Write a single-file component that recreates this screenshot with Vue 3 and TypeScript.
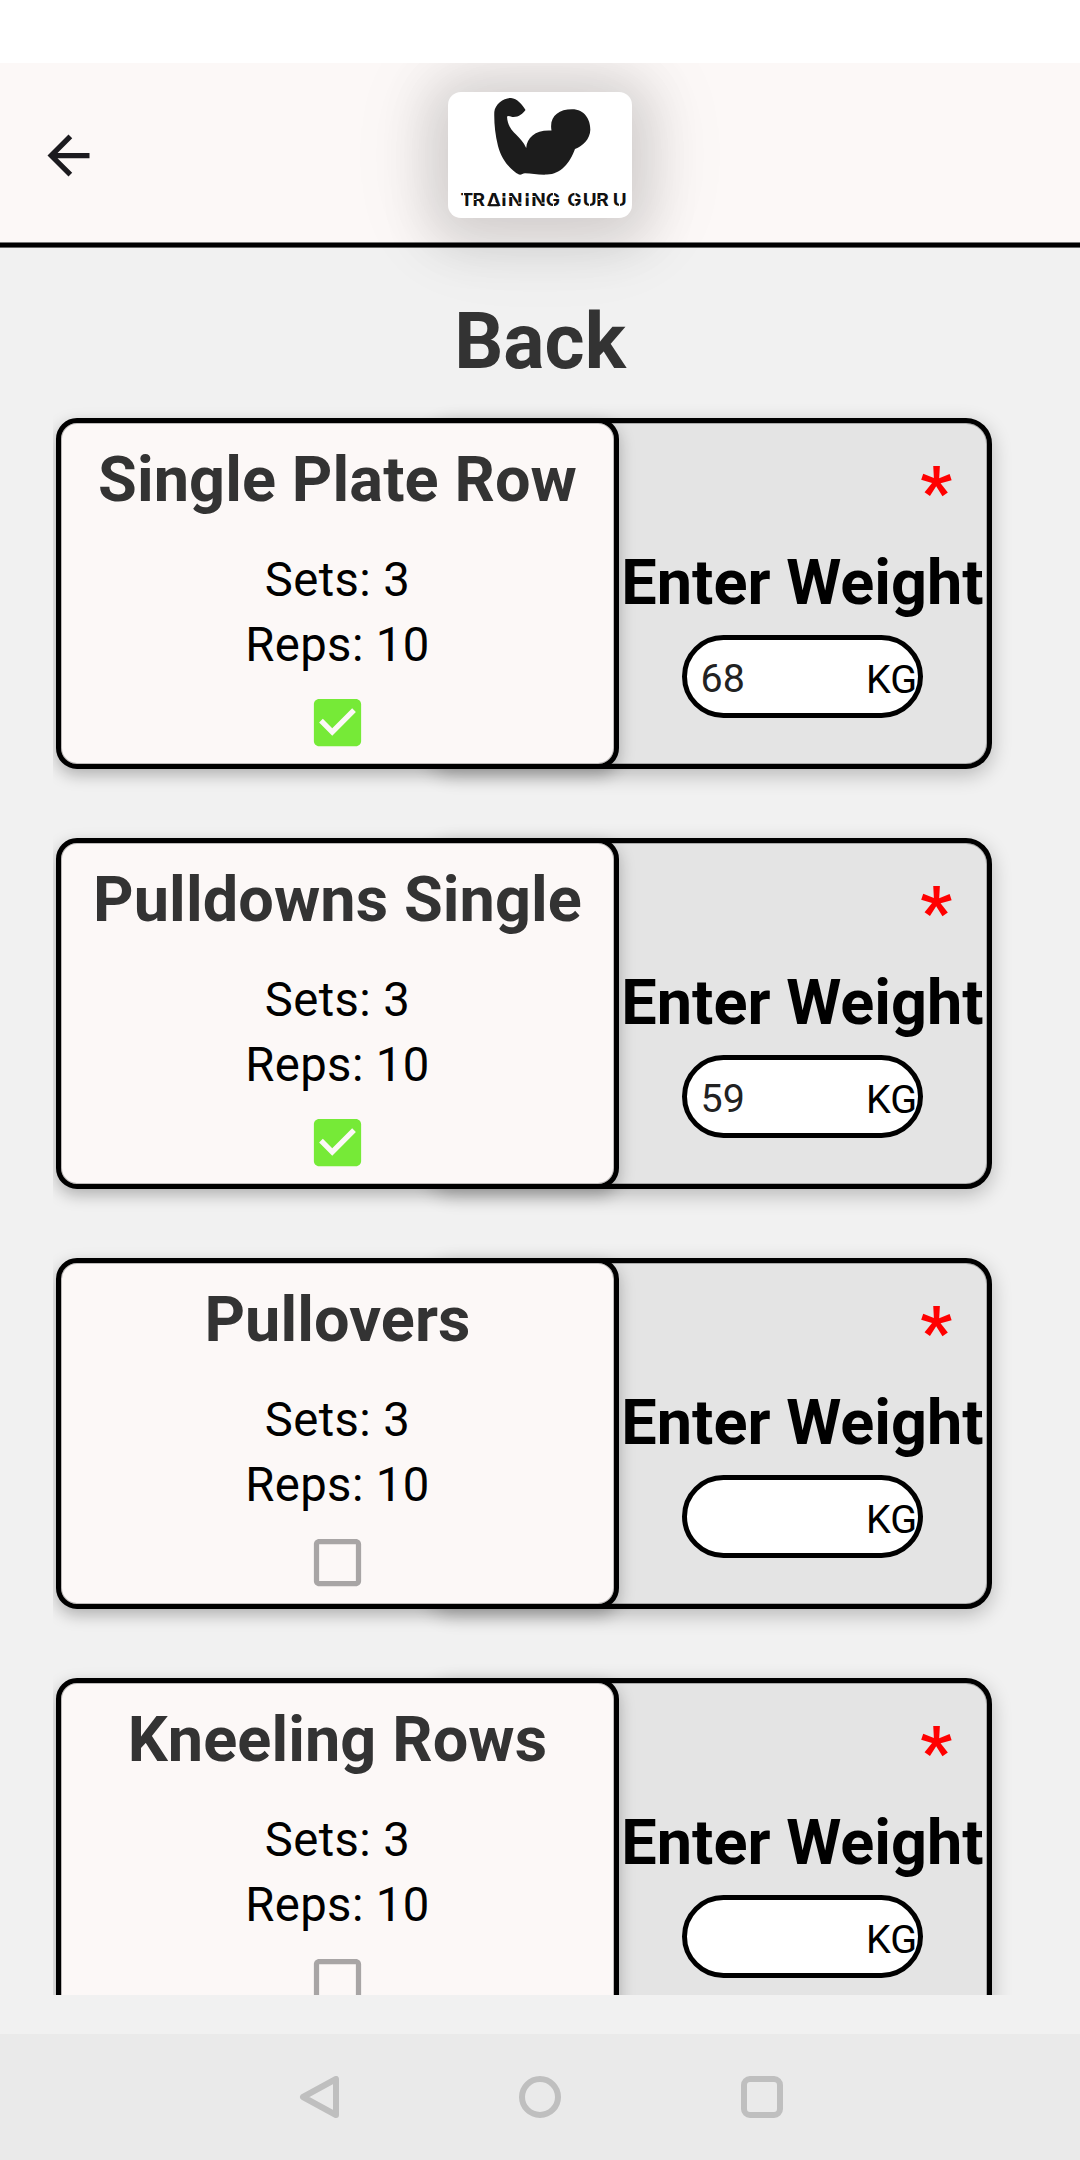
<script setup lang="ts">
interface Exercise {
  name: string
  sets: number
  reps: number
  done: boolean
  weight: string
}

const exercises: Exercise[] = [
  { name: 'Single Plate Row', sets: 3, reps: 10, done: true, weight: '68' },
  { name: 'Pulldowns Single', sets: 3, reps: 10, done: true, weight: '59' },
  { name: 'Pullovers', sets: 3, reps: 10, done: false, weight: '' },
  { name: 'Kneeling Rows', sets: 3, reps: 10, done: false, weight: '' },
]
</script>

<template>
  <div class="screen">
    <div class="status"></div>
    <div class="body">
      <header class="header">
        <svg class="back" viewBox="0 0 24 24" width="63" height="63" fill="#1c1b1f">
          <path d="M20 11H7.83l5.59-5.59L12 4l-8 8 8 8 1.41-1.41L7.83 13H20v-2z" />
        </svg>
        <div class="logo">
          <svg viewBox="0 0 184 126" width="184" height="126">
            <path
              fill="#1c1c1c"
              d="M71 82.600C63 78 54 69 50 54C47 42 46 30 46.300 20C47 12 56 5.800 63 6C69 6.500 74.500 12.500 77.500 18C75 21.500 71 25 65.500 25C63 25 61 23 59 24.500C60 41 72 42 78.200 56C79 45 88 37.500 103.500 38.500C101 25 110 17.300 124 17.300C137 17.300 142.500 28 142.300 38C142 47 135 54 127 57C122 71 113 82 99 82.600C90 83 84 81.300 77 81.300C74.500 81.300 73.500 83.200 71 82.600Z"
            />
            <text
              transform="scale(1.1 1)"
              y="114.300"
              x="11.400 22.400 35.300 48.500 54.500 69.600 75.700 88.900 102 108.300 122.500 134.800 149.700"
              class="brand"
            >TRAINING GURU</text>
            <!-- stencil cuts and the closed base of the A -->
            <path fill="#fff" d="M45.700 105.500L48.800 112.200H42.600Z" />
            <g fill="none" stroke="#111" stroke-width="2.200"><path d="M41 113.200H51" /></g>
            <g fill="none" stroke="#fff" stroke-width="1.100">
              <path d="M15.500 101V104.300M53 105H58.500M76.500 105H82M26 107.500H28.500M150 107.500H152.500" />
              <path d="M60.500 104.500H64M84 104.500H87.500M70 111H74M93.500 111H97" />
              <path d="M105.500 100.500V104.500M105.500 111.500V115M127 100.500V104.500M127 111.500V115M141.500 111V115M171.500 111V115" />
            </g>
          </svg>
        </div>
      </header>
      <h1 class="title">Back</h1>
      <main class="list">
        <section v-for="e in exercises" :key="e.name" class="card">
          <div class="info">
            <h2>{{ e.name }}</h2>
            <p>Sets: {{ e.sets }}</p>
            <p>Reps: {{ e.reps }}</p>
            <svg class="check" viewBox="0 0 24 24" width="63" height="63">
              <path
                v-if="e.done"
                fill="#76ea37"
                d="M19 3H5c-1.110 0-2 .9-2 2v14c0 1.100.89 2 2 2h14c1.110 0 2-.9 2-2V5c0-1.100-.89-2-2-2zm-9 14l-5-5 1.410-1.410L10 14.170l7.590-7.590L19 8l-9 9z"
              />
              <path
                v-else
                fill="#a8a5a5"
                d="M19 5v14H5V5h14m0-2H5c-1.100 0-2 .9-2 2v14c0 1.100.9 2 2 2h14c1.100 0 2-.9 2-2V5c0-1.100-.9-2-2-2z"
              />
            </svg>
          </div>
          <div class="entry">
            <span class="star">*</span>
            <span class="label">Enter Weight</span>
            <div class="field">
              <span class="value">{{ e.weight }}</span>
              <span class="unit">KG</span>
            </div>
          </div>
        </section>
      </main>
    </div>
    <nav class="nav">
      <svg viewBox="0 0 42 42" width="42" height="42">
        <path d="M39 3V39L6 21Z" />
      </svg>
      <svg viewBox="0 0 42 42" width="42" height="42"><circle cx="21" cy="21" r="18" /></svg>
      <svg viewBox="0 0 42 42" width="42" height="42">
        <rect x="3" y="3" width="36" height="36" rx="6" />
      </svg>
    </nav>
  </div>
</template>

<style>
body {
  margin: 0;
}
</style>

<style scoped>
.screen {
  width: 1080px;
  height: 2160px;
  display: flex;
  flex-direction: column;
  overflow: hidden;
  background: #f1f1f1;
  font-family: Roboto, 'Liberation Sans', sans-serif;
}
.status {
  height: 63px;
  flex: none;
  background: #fff;
}
.body {
  height: 1971px;
  flex: none;
  overflow: hidden;
  display: flex;
  flex-direction: column;
}
.header {
  height: 184px;
  flex: none;
  box-sizing: border-box;
  border-bottom: 4px solid #000;
  box-shadow: 0 1px 0 #666, inset 0 -1px 0 #777;
  background: #fcf8f7;
  display: flex;
  align-items: flex-start;
}
.back {
  margin: 61px 0 0 37px;
}
.logo {
  width: 184px;
  height: 126px;
  margin: 29px 0 0 348px;
  border-radius: 13px;
  background: #fff;
  box-shadow: 0 8px 50px 20px rgba(0, 0, 0, 0.12), 0 0 90px 20px rgba(0, 0, 0, 0.07);
}
.logo svg {
  display: block;
}
.brand {
  font: 700 17.300px Inter, sans-serif;
  fill: #111;
}
.title {
  margin: 50px 0 0;
  height: 90px;
  line-height: 91px;
  font-size: 77px;
  font-weight: 700;
  text-align: center;
  color: #333;
}
.list {
  margin: 0 0 0 53px;
  height: 1608px;
  flex: none;
  overflow: hidden;
}
.card {
  display: flex;
  height: 351px;
  padding: 31px 0 38px 3px;
}
.info,
.entry {
  box-sizing: border-box;
  height: 351px;
  border: 5px solid #000;
  display: flex;
  flex-direction: column;
  align-items: center;
}
.info {
  position: relative;
  z-index: 1;
  width: 563px;
  border-radius: 21px;
  background: #fcf8f7;
  box-shadow: 0 6px 16px rgba(0, 0, 0, 0.27), inset 0 0 0 1px rgba(0, 0, 0, 0.25);
}
.info h2 {
  margin: 20px 0 31px;
  font-size: 63px;
  line-height: 74px;
  font-weight: 700;
  letter-spacing: 0.1px;
  color: #333;
  white-space: nowrap;
}
.info p {
  margin: 0;
  font-size: 47.250px;
  line-height: 65px;
  letter-spacing: 0.4px;
  color: #000;
}
.check {
  margin-top: 12.500px;
}
.entry {
  width: 564px;
  margin-left: -191px;
  padding-left: 184px;
  border-radius: 26px;
  background: #e4e4e4;
  box-shadow: 0 6px 20px rgba(0, 0, 0, 0.24), inset 0 0 0 1px rgba(0, 0, 0, 0.25);
}
.star {
  align-self: flex-end;
  margin: 30px 35px 15px 0;
  height: 78px;
  font-size: 70px;
  line-height: 78px;
  font-weight: 700;
  color: #f00;
}
.label {
  margin-left: 1px;
  font-size: 63px;
  line-height: 74px;
  font-weight: 700;
  white-space: nowrap;
}
.field {
  box-sizing: border-box;
  width: 241px;
  height: 83px;
  margin-top: 15px;
  border: 5px solid #000;
  border-radius: 42px;
  background: #fff;
  display: flex;
  align-items: center;
  justify-content: space-between;
  padding: 3px 0.500px 0 14px;
  font-size: 39.400px;
}
.value {
  color: #222;
}
.unit {
  position: relative;
  top: 1px;
  color: #000;
}
.nav {
  flex: 1;
  display: flex;
  justify-content: center;
  align-items: center;
  gap: 180px;
  background: #eaeaea;
}
.nav svg {
  fill: none;
  stroke: #bfbfbf;
  stroke-width: 6;
  stroke-linejoin: round;
}
</style>
